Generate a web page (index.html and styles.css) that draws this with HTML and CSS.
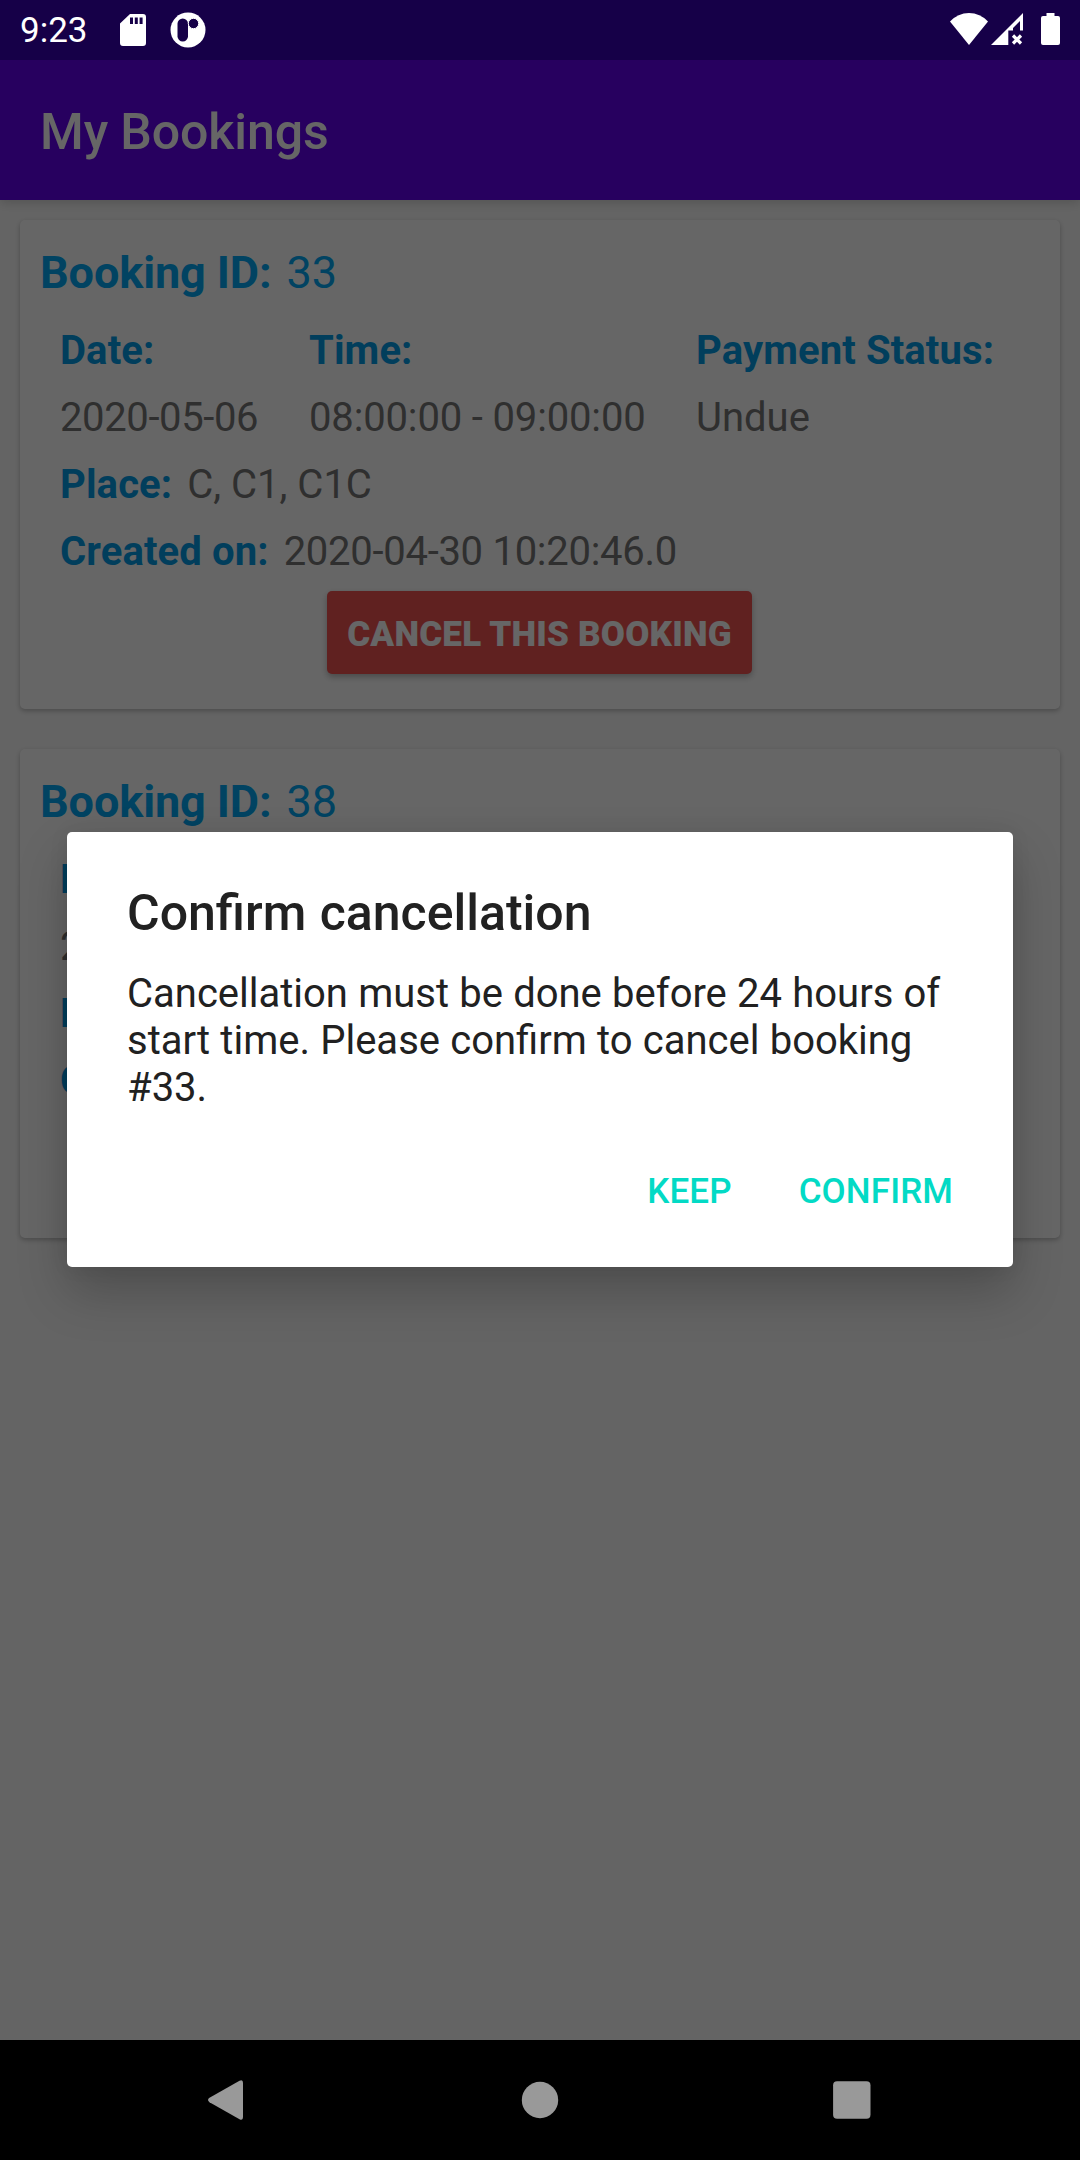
FILE: index.html
```html
<!DOCTYPE html>
<html lang="en">
<head>
<meta charset="utf-8">
<title>My Bookings</title>
<link rel="stylesheet" href="styles.css">
</head>
<body>
<div class="screen">
  <header class="status-bar">
    <span class="clock">9:23</span>
    <svg class="icon-sd" width="26" height="32" viewBox="0 0 26 32"><path fill="#fff" fill-rule="evenodd" d="M10 0H23Q26 0 26 3V29Q26 32 23 32H3Q0 32 0 29V9.500ZM10 3.500V10H13V3.500ZM14.800 3.500V10H17.800V3.500ZM19.600 3.500V10H22.600V3.500Z"/></svg>
    <svg class="icon-app" width="36" height="36" viewBox="0 0 36 36"><circle cx="18" cy="18" r="17.500" fill="#fff"/><rect x="7.500" y="6.500" width="10.500" height="23" rx="5.250" fill="#160048"/><circle cx="23.500" cy="11.500" r="5.200" fill="#160048" stroke="#fff" stroke-width="1"/></svg>
    <svg class="icon-wifi" width="38" height="32" viewBox="0 0 38 32"><path fill="#fff" d="M0 8.500Q8 0 19 0T38 8.500L19 32Z"/></svg>
    <svg class="icon-signal" width="33" height="33" viewBox="0 0 33 33"><path fill="#fff" fill-rule="evenodd" d="M32 0V17.500H29V8L22 15V17.500H17.300V32H0Z"/><path d="M22 22.500L30 30.500M30 22.500L22 30.500" stroke="#fff" stroke-width="3.200"/></svg>
    <svg class="icon-battery" width="19" height="32" viewBox="0 0 19 32"><path fill="#fff" d="M5.500 0H13.500V3H17Q19 3 19 5V30Q19 32 17 32H2Q0 32 0 30V5Q0 3 2 3H5.500Z"/></svg>
  </header>
  <div class="app-bar"><h1>My Bookings</h1></div>
  <main class="list">
    <section class="card">
      <div class="card-head"><b>Booking ID:</b><span>33</span></div>
      <div class="columns">
        <div class="date"><b>Date:</b><span>2020-05-06</span></div>
        <div class="time"><b>Time:</b><span>08:00:00 - 09:00:00</span></div>
        <div><b>Payment Status:</b><span>Undue</span></div>
      </div>
      <div class="row"><b>Place:</b><span>C, C1, C1C</span></div>
      <div class="row created"><b>Created on:</b><span>2020-04-30 10:20:46.0</span></div>
      <button class="cancel">CANCEL THIS BOOKING</button>
    </section>
    <section class="card">
      <div class="card-head"><b>Booking ID:</b><span>38</span></div>
      <div class="columns">
        <div class="date"><b>D</b><span>2</span></div>
      </div>
      <div class="row"><b>P</b></div>
      <div class="row"><b>C</b></div>
    </section>
  </main>
  <nav class="nav-bar">
    <svg width="312" height="40" viewBox="0 0 312 40"><path fill="#999" d="M137.500 17.800L167.500 .8Q171 -1 171 3V37Q171 41 167.500 39.200L137.500 22.200Q134.500 20 137.500 17.800Z"/></svg>
    <svg width="312" height="40" viewBox="0 0 312 40"><circle cx="156" cy="20" r="18.200" fill="#999"/></svg>
    <svg width="312" height="40" viewBox="0 0 312 40"><rect x="137.100" y="1.200" width="37.400" height="37.600" rx="4" fill="#999"/></svg>
  </nav>
</div>
<div class="scrim">
  <div class="dialog">
    <h2>Confirm cancellation</h2>
    <p>Cancellation must be done before 24 hours of start time. Please confirm to cancel booking #33.</p>
    <div class="actions"><button>KEEP</button><button>CONFIRM</button></div>
  </div>
</div>
</body>
</html>
```
FILE: styles.css
```css
* { box-sizing: border-box; margin: 0; padding: 0; }
body {
  width: 1080px;
  height: 2160px;
  overflow: hidden;
  font-family: Roboto, "Liberation Sans", sans-serif;
}
button { font-family: inherit; border: 0; background: none; }
.screen {
  display: flex;
  flex-direction: column;
  height: 2160px;
  background: #fafafa;
}
.status-bar {
  display: flex;
  align-items: flex-start;
  flex: none;
  height: 60px;
  padding: 0 20px;
  background: #160048;
  color: #fff;
  position: relative;
  z-index: 3;
}
.clock { font-size: 35px; line-height: 61px; width: 100px; }
.icon-sd { margin-top: 14px; }
.icon-app { margin: 12px 0 0 24px; }
.icon-wifi { margin: 13px 0 0 auto; }
.icon-signal { margin: 13px 0 0 3px; }
.icon-battery { margin: 13px 0 0 17px; }
.app-bar {
  flex: none;
  height: 140px;
  padding-left: 40px;
  background: #6200ee;
  box-shadow: 0 3px 10px rgba(0, 0, 0, .16);
  color: #fff;
}
.app-bar h1 { font-size: 50px; font-weight: 500; line-height: 144px; letter-spacing: -.1px; }
.list {
  flex: 1;
  display: flex;
  flex-direction: column;
  gap: 40px;
  padding: 20px;
}
.card {
  display: flex;
  flex-direction: column;
  height: 489px;
  padding: 24px 20px 0;
  border-radius: 5px;
  background: #fff;
  box-shadow: 0 2px 5px rgba(0, 0, 0, .26);
  font-size: 40px;
  line-height: 67px;
  color: #757575;
}
.card b { color: #039be5; font-weight: 700; letter-spacing: .12px; }
.card-head {
  display: flex;
  gap: 15px;
  margin-bottom: 16px;
  font-size: 45px;
  line-height: 57px;
  color: #03a9f4;
}
.card-head b { color: #03a9f4; letter-spacing: -.1px; }
.columns { display: flex; padding-left: 20px; }
.columns > div { display: flex; flex-direction: column; white-space: nowrap; }
.columns .date { width: 249px; }
.columns .time { width: 387px; }
.date span { letter-spacing: -.38px; }
.time span { letter-spacing: -.15px; }
.row { display: flex; gap: 15px; padding-left: 20px; }
.created span { letter-spacing: -.28px; }
.cancel {
  align-self: center;
  width: 425px;
  height: 83px;
  margin: 6px 1px 0 0;
  padding-top: 3px;
  border-radius: 5px;
  background: #ef5350;
  box-shadow: 0 3px 6px rgba(0, 0, 0, .28);
  color: #fff;
  font-size: 35px;
  font-weight: 900;
  letter-spacing: .2px;
}
.nav-bar {
  display: flex;
  justify-content: center;
  align-items: center;
  flex: none;
  height: 120px;
  background: #000;
  position: relative;
  z-index: 3;
}
.scrim {
  position: absolute;
  inset: 60px 0 120px;
  height: 1980px;
  display: flex;
  justify-content: center;
  align-items: flex-start;
  padding-top: 772px;
  background: rgba(0, 0, 0, .6);
}
.dialog {
  width: 946px;
  height: 435px;
  padding: 52px 60px 0;
  border-radius: 5px;
  background: #fff;
  box-shadow: 0 25px 50px rgba(0, 0, 0, .22), 0 0 20px rgba(0, 0, 0, .07);
  color: #212121;
}
.dialog h2 { font-size: 50px; font-weight: 500; line-height: 59px; word-spacing: 1px; }
.dialog p { margin-top: 27px; font-size: 40px; line-height: 47px; word-spacing: .3px; }
.actions { display: flex; justify-content: flex-end; gap: 67px; margin-top: 60px; }
.actions button {
  color: #03dac5;
  font-size: 35px;
  font-weight: 500;
  line-height: 41px;
  letter-spacing: .1px;
}
```
